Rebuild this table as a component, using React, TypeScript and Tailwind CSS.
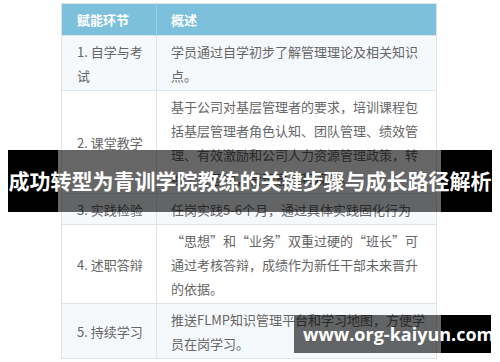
import React from 'react';

const rows = [
  { step: ['1. 自学与考', '试'], desc: ['学员通过自学初步了解管理理论及相关知识', '点。'] },
  {
    step: ['2. 课堂教学'],
    desc: [
      '基于公司对基层管理者的要求，培训课程包',
      '括基层管理者角色认知、团队管理、绩效管',
      '理、有效激励和公司人力资源管理政策，转',
      '换学员思想，管理意识和观念。'
    ]
  },
  { step: ['3. 实践检验'], desc: ['任岗实践5-6个月，通过具体实践固化行为'] },
  {
    step: ['4. 述职答辩'],
    desc: ['“思想”和“业务”双重过硬的“班长”可', '通过考核答辩，成绩作为新任干部未来晋升', '的依据。']
  },
  { step: ['5. 持续学习'], desc: ['推送FLMP知识管理平台和学习地图，方便学', '员在岗学习。'] }
];

const App = () => {
  return (
    <div className="relative w-[500px] h-[362px] overflow-hidden bg-white font-['Noto_Sans_CJK_SC','Noto_Sans',sans-serif]">
      <div className="ml-[61px] pt-[3px] w-[376px]">
        <table className="w-full table-fixed border-collapse border border-[#dfe4e9] text-[13px] leading-[24px] text-[#666]">
          <colgroup>
            <col className="w-[95px]" />
            <col />
          </colgroup>
          <thead>
            <tr className="bg-[#7cc0dc] text-white font-bold">
              <th className="h-[32px] pl-[15px] text-left font-bold border-r border-[#9fd0e5]">赋能环节</th>
              <th className="pl-[14px] text-left font-bold">概述</th>
            </tr>
          </thead>
          <tbody>
            {rows.map((row, i) => (
              <tr key={i} className={i % 2 === 0 ? 'bg-[#f6f9fc]' : 'bg-white'}>
                <td className="pl-[15px] pr-[4px] pt-[4px] pb-[2px] align-middle border-t border-r border-[#dfe4e9] whitespace-nowrap">
                  {row.step.map((s, j) => (
                    <div key={j}>{s}</div>
                  ))}
                </td>
                <td className="pl-[14px] pr-[6px] pt-[4px] pb-[2px] align-middle border-t border-[#dfe4e9] whitespace-nowrap">
                  {row.desc.map((d, j) => (
                    <div key={j}>{d}</div>
                  ))}
                </td>
              </tr>
            ))}
          </tbody>
        </table>
      </div>

      {/* title banner over the table */}
      <div className="absolute left-[8px] top-[150px] w-[484px] h-[62px] flex">
        <div className="w-[50px] bg-black" />
        <div className="w-[383px] bg-black/60" />
        <div className="flex-1 bg-black" />
        <div className="absolute inset-0 flex items-center justify-center text-white text-[21px] font-bold whitespace-nowrap">
          成功转型为青训学院教练的关键步骤与成长路径解析
        </div>
      </div>

      {/* watermark */}
      <div className="absolute left-[294px] top-[315px] w-[197px] h-[38px] flex">
        <div className="w-[147px] bg-black/60" />
        <div className="flex-1 bg-black" />
        <div className="absolute inset-0 flex items-center pl-[9px] text-white text-[18px] font-bold font-['Open_Sans',sans-serif] whitespace-nowrap">
          www.org-kaiyun.com
        </div>
      </div>
    </div>
  );
};

export default App;
